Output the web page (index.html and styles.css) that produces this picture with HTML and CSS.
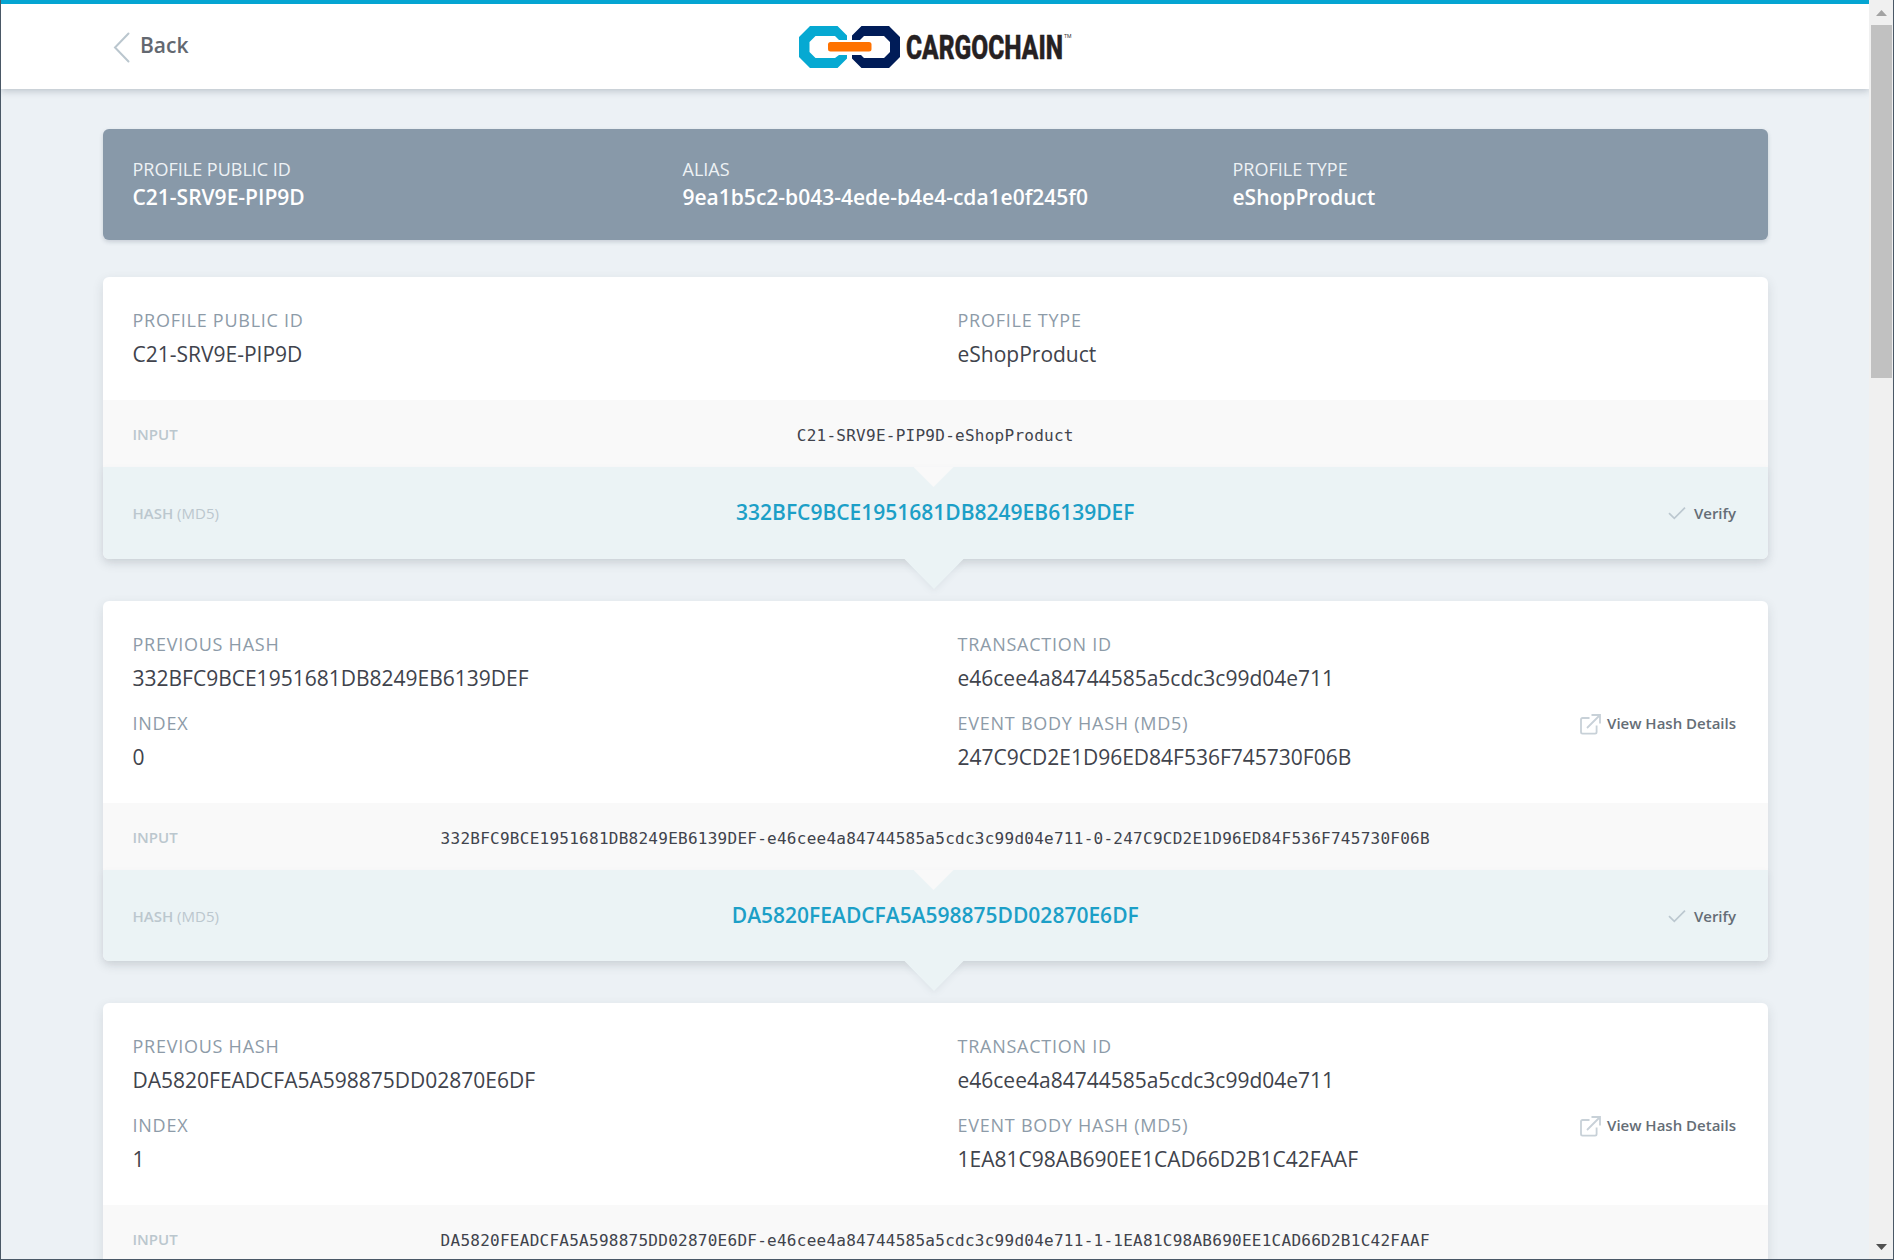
FILE: index.html
```html
<!DOCTYPE html>
<html lang="en">
<head>
<meta charset="utf-8">
<title>Cargochain</title>
<link rel="stylesheet" href="styles.css">
</head>
<body>
<svg width="0" height="0" class="defs">
  <symbol id="check" viewBox="0 0 18 14"><path d="M1 7.2 6.3 12.4 17 1.6" fill="none" stroke="#bcc8d0" stroke-width="1.7"/></symbol>
  <symbol id="external" viewBox="0 0 21 21"><path d="M9.500 4H2.600Q1 4 1 5.600V18Q1 19.600 2.600 19.600H15Q16.600 19.600 16.600 18V11.500M7 14 19.500 1.500M11.500 1H20V9.500" fill="none" stroke="#c8d1d8" stroke-width="1.8"/></symbol>
</svg>
<div class="window">
  <div class="page">
    <header class="topbar">
      <a class="back"><svg width="17" height="31" viewBox="0 0 17 31"><path d="M15.500 1.500 2 15.500 15.500 29.500" fill="none" stroke="#bac6ce" stroke-width="2" stroke-linecap="round"/></svg><span>Back</span></a>
      <svg class="logo" width="280" height="46" viewBox="0 0 280 46">
        <path fill="#06a9d2" fill-rule="evenodd" d="M11 2H38.500L48 11.500V16H40L36 12H16.500L10.500 18V28L16.500 34H36L40 31H48V34.500L38.500 44H11L0 33V13Z"/>
        <path fill="#001c58" d="M53 16V11.500L62.500 2H90L101 13V33L90 44H62.500L53 34.500V31H62L65 34H85L91 28V18L85 12H65L61 16Z"/>
        <rect x="29" y="18" width="43.500" height="9.500" rx="2.500" fill="#ff7200"/>
        <text class="logo-text" x="107" y="34.600" textLength="157" lengthAdjust="spacingAndGlyphs">CARGOCHAIN</text>
        <text class="logo-tm" x="265" y="14" textLength="7.500" lengthAdjust="spacingAndGlyphs">TM</text>
      </svg>
    </header>
    <main class="content">
      <section class="banner">
        <div><div class="banner-label">PROFILE PUBLIC ID</div><div class="banner-value">C21-SRV9E-PIP9D</div></div>
        <div><div class="banner-label">ALIAS</div><div class="banner-value">9ea1b5c2-b043-4ede-b4e4-cda1e0f245f0</div></div>
        <div><div class="banner-label">PROFILE TYPE</div><div class="banner-value">eShopProduct</div></div>
      </section>

      <section class="card">
        <div class="fields">
          <div class="field"><div class="label">PROFILE PUBLIC ID</div><div class="value">C21-SRV9E-PIP9D</div></div>
          <div class="field"><div class="label">PROFILE TYPE</div><div class="value">eShopProduct</div></div>
        </div>
        <div class="strip input"><span class="tag"><b>INPUT</b></span><code>C21-SRV9E-PIP9D-eShopProduct</code></div>
        <div class="strip hash"><span class="tag"><b>HASH</b> (MD5)</span><strong>332BFC9BCE1951681DB8249EB6139DEF</strong><a class="action verify"><svg width="18" height="14"><use href="#check"/></svg>Verify</a></div>
      </section>

      <section class="card">
        <div class="fields">
          <div class="field"><div class="label">PREVIOUS HASH</div><div class="value">332BFC9BCE1951681DB8249EB6139DEF</div></div>
          <div class="field"><div class="label">TRANSACTION ID</div><div class="value">e46cee4a84744585a5cdc3c99d04e711</div></div>
          <div class="field"><div class="label">INDEX</div><div class="value">0</div></div>
          <div class="field with-link"><div><div class="label">EVENT BODY HASH (MD5)</div><div class="value">247C9CD2E1D96ED84F536F745730F06B</div></div><a class="action details"><svg width="21" height="21"><use href="#external"/></svg>View Hash Details</a></div>
        </div>
        <div class="strip input"><span class="tag"><b>INPUT</b></span><code>332BFC9BCE1951681DB8249EB6139DEF-e46cee4a84744585a5cdc3c99d04e711-0-247C9CD2E1D96ED84F536F745730F06B</code></div>
        <div class="strip hash"><span class="tag"><b>HASH</b> (MD5)</span><strong>DA5820FEADCFA5A598875DD02870E6DF</strong><a class="action verify"><svg width="18" height="14"><use href="#check"/></svg>Verify</a></div>
      </section>

      <section class="card">
        <div class="fields">
          <div class="field"><div class="label">PREVIOUS HASH</div><div class="value">DA5820FEADCFA5A598875DD02870E6DF</div></div>
          <div class="field"><div class="label">TRANSACTION ID</div><div class="value">e46cee4a84744585a5cdc3c99d04e711</div></div>
          <div class="field"><div class="label">INDEX</div><div class="value">1</div></div>
          <div class="field with-link"><div><div class="label">EVENT BODY HASH (MD5)</div><div class="value">1EA81C98AB690EE1CAD66D2B1C42FAAF</div></div><a class="action details"><svg width="21" height="21"><use href="#external"/></svg>View Hash Details</a></div>
        </div>
        <div class="strip input"><span class="tag"><b>INPUT</b></span><code>DA5820FEADCFA5A598875DD02870E6DF-e46cee4a84744585a5cdc3c99d04e711-1-1EA81C98AB690EE1CAD66D2B1C42FAAF</code></div>
      </section>
    </main>
  </div>
  <div class="scrollbar">
    <svg width="11" height="6" viewBox="0 0 11 6"><path d="M0 6 5.500 0 11 6Z" fill="#a3a3a3"/></svg>
    <div class="thumb"></div>
    <svg class="down" width="11" height="6" viewBox="0 0 11 6"><path d="M0 0H11L5.500 6Z" fill="#505050"/></svg>
  </div>
</div>
</body>
</html>
```
FILE: styles.css
```css
* { box-sizing: border-box; }
body { margin: 0; font-family: "Open Sans", sans-serif; color: #40434c; }
.defs { display: none; }
.window {
  display: flex;
  height: 1260px;
  overflow: hidden;
  border: solid #4a5866;
  border-width: 0 1px 1px;
}
.page { flex: 1; min-width: 0; background: #ecf1f5; overflow: hidden; }

.topbar {
  position: relative;
  display: grid;
  grid-template-columns: 1fr 280px 1fr;
  align-items: start;
  height: 89px;
  border-top: 4px solid #05a5d2;
  background: #fff;
  box-shadow: 0 2px 7px rgba(40, 55, 75, .25);
}
.back {
  display: flex;
  gap: 10px;
  padding: 28px 0 0 112px;
  font-size: 21px;
  line-height: 28px;
  font-weight: 600;
  color: #636870;
}
.back span { margin-top: -1px; }
.logo { margin: 20px 0 0 4px; overflow: visible; }
.logo-text { font: 800 32.500px Roboto, sans-serif; fill: #262122; stroke: #262122; stroke-width: .5px; }
.logo-tm { font: 5px Roboto, sans-serif; fill: #333; }

.content { width: 1665px; margin: 40px 0 0 102px; }
.banner {
  display: grid;
  grid-template-columns: repeat(3, 550px);
  height: 111px;
  padding: 27px 0 0 29.500px;
  border-radius: 6px;
  background: #8899a9;
  box-shadow: 0 2px 4px rgba(40, 55, 75, .18);
  color: #fff;
}
.banner-label { font-size: 18px; line-height: 27px; color: #eef2f5; }
.banner-value { font-size: 21px; line-height: 28px; font-weight: 600; }

.card {
  margin-top: 42px;
  border-radius: 6px;
  background: #fff;
  box-shadow: 0 4px 12px rgba(40, 50, 60, .12);
}
.banner + .card { margin-top: 37px; }
.fields {
  display: grid;
  grid-template-columns: 825px 1fr;
  row-gap: 16px;
  padding: 30px 32px 30px 29.500px;
}
.label { font-size: 18px; line-height: 27px; letter-spacing: .75px; color: #8d9ba8; }
.value { margin-top: 4px; font-size: 21px; line-height: 32px; }
.with-link { display: flex; justify-content: space-between; align-items: flex-start; }
.action { display: flex; align-items: center; gap: 8px; font-size: 15px; line-height: 22px; font-weight: 600; color: #656d76; }
.details { gap: 6px; }
.details svg { margin-top: 4px; }

.strip {
  position: relative;
  display: grid;
  grid-template-columns: 200px 1fr 200px;
  align-items: center;
  padding: 0 30px 0 29.500px;
}
.tag { font-size: 15px; color: #bbc7ce; }
.tag b { font-weight: 600; }
.strip code, .strip strong { text-align: center; white-space: nowrap; }
.input { height: 67px; background: #f9f9f9; }
.input code { padding-top: 3px; font: 16px "DejaVu Sans Mono", monospace; letter-spacing: .26px; }
.hash { height: 92px; border-radius: 0 0 6px 6px; background: #ebf3f5; }
.card + .card .hash { height: 91px; }
.hash strong { padding-bottom: 2px; font-size: 21px; font-weight: 600; color: #1c9fc7; }
.verify { justify-self: end; margin-right: 2px; }

/* Arrows that lead from the input to the hash and on to the next block */
.hash::before, .hash::after { content: ""; position: absolute; clip-path: polygon(0 0, 100% 0, 50% 100%); }
.hash::before { left: 810.500px; top: 0; width: 40px; height: 20px; background: #f9f9f9; }
.hash::after { left: 800.500px; top: calc(100% - 1px); width: 61px; height: 31px; background: #ebf3f5; }
.hash { filter: drop-shadow(0 3px 3px rgba(40, 50, 60, .06)); }

.scrollbar {
  display: flex;
  flex-direction: column;
  align-items: center;
  width: 24px;
  padding: 10px 1px 9px 2px;
  background: #f0f0f0;
}
.thumb { width: 21px; height: 353px; margin-top: 9px; background: #c1c1c1; }
.down { margin-top: auto; }
```
